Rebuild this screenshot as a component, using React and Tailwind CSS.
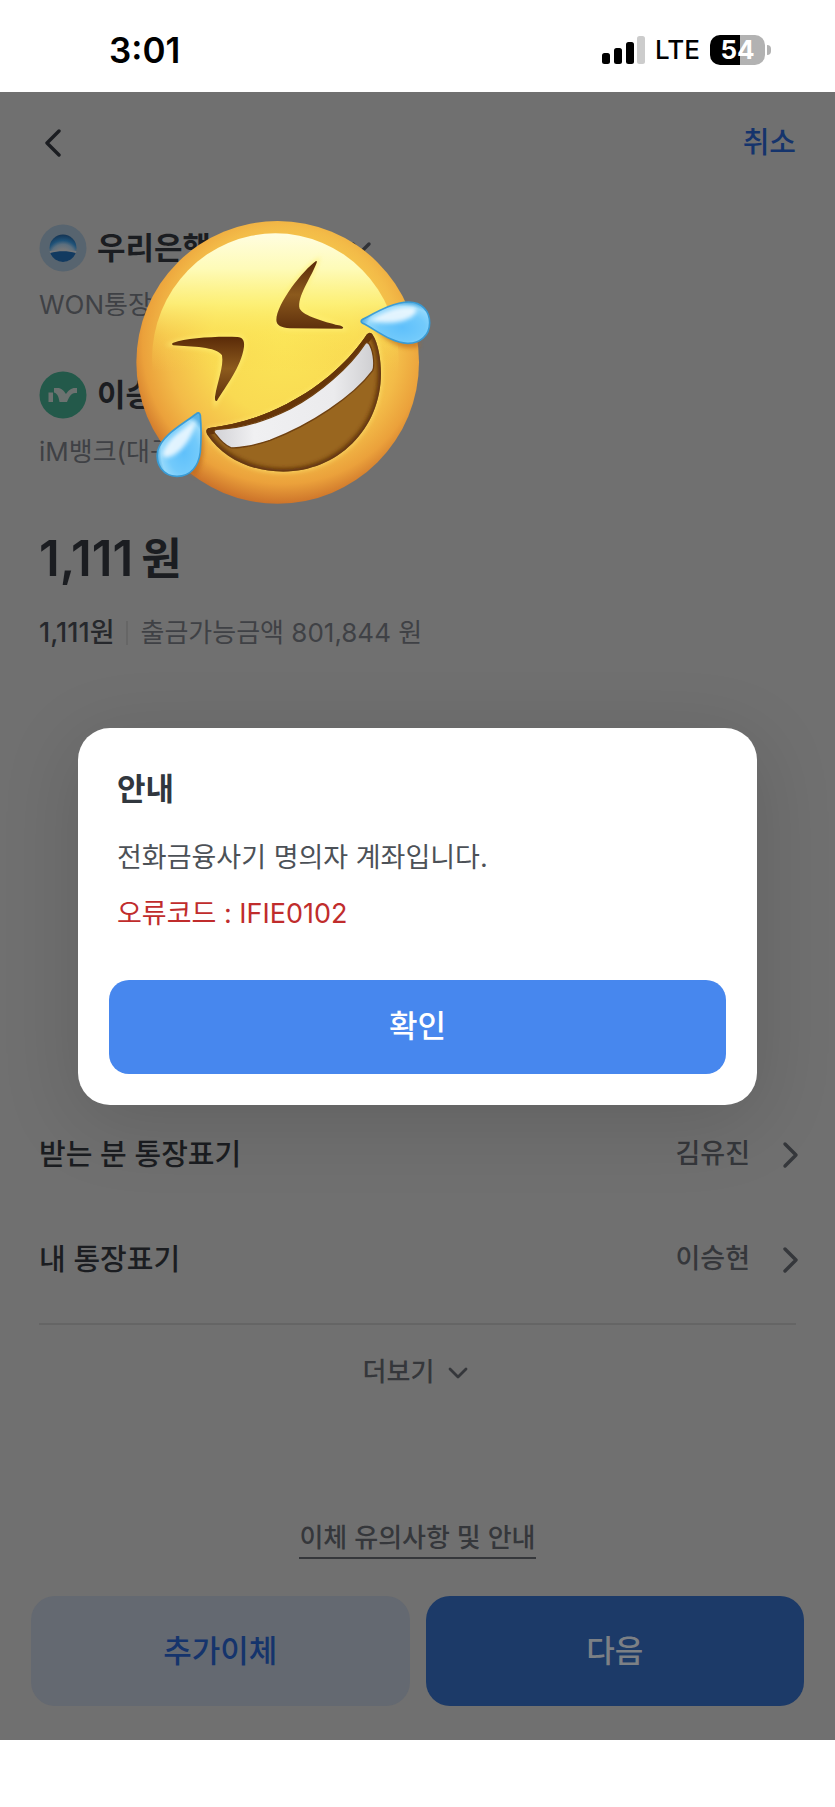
import { useState } from "react";
import clsx from "clsx";

const ENTRIES = [
  { id: "receiver", label: "받는 분 통장표기", value: "김유진" },
  { id: "mine", label: "내 통장표기", value: "이승현" },
];

function Chevron({ points, className, width = 3.4 }) {
  return (
    <svg viewBox="0 0 28 28" className={clsx("h-7 w-7", className)} fill="none" aria-hidden="true">
      <polyline
        points={points}
        stroke="currentColor"
        strokeWidth={width}
        strokeLinecap="round"
        strokeLinejoin="round"
      />
    </svg>
  );
}

function StatusBar() {
  return (
    <div className="flex h-[92px] items-center justify-between bg-white pt-2 pr-16 pl-[109px] text-black">
      <span className="text-[35px] leading-10 font-semibold">3:01</span>
      <div className="flex items-center">
        <svg viewBox="0 0 44 28" className="h-7 w-11" aria-hidden="true">
          <rect x="1" y="17" width="8" height="11" rx="2.5" />
          <rect x="13" y="12" width="8" height="16" rx="2.5" />
          <rect x="25" y="6" width="8" height="22" rx="2.5" />
          <rect x="36" y="0" width="8" height="28" rx="2.5" fill="#cccccc" />
        </svg>
        <span className="ml-2.5 text-[26px] leading-10 font-medium">LTE</span>
        <div className="ml-2.5 flex h-[30px] w-[55px] items-center justify-center rounded-[10px] bg-linear-to-r from-black from-54% to-[#b2b2b2] to-54% text-[26px] leading-[30px] font-bold text-white">
          54
        </div>
        <span className="ml-0.5 h-2.5 w-1 rounded-r-full bg-[#b2b2b2]" />
      </div>
    </div>
  );
}

function WooriLogo() {
  return (
    <svg viewBox="0 0 48 48" className="h-12 w-12" aria-hidden="true">
      <defs>
        <radialGradient id="woori" gradientUnits="userSpaceOnUse" cx="24" cy="33" r="23">
          <stop offset="0.35" stopColor="#74777a" />
          <stop offset="0.55" stopColor="#5c6f7e" />
          <stop offset="0.72" stopColor="#1f5278" />
          <stop offset="1" stopColor="#12304f" />
        </radialGradient>
      </defs>
      <circle cx="24" cy="24" r="23.5" fill="#57646f" />
      <circle cx="24" cy="24" r="13.5" fill="url(#woori)" />
      <path d="M10.6 27c8-1.500 18.800-1.500 26.800 0l-.6 2.500c-8-2.200-17.600-2.200-25.600 0z" fill="#74777a" />
      <path d="M11.300 29c8-2.200 17.400-2.200 25.400 0a13.500 13.500 0 0 1-25.400 0z" fill="#123a60" />
    </svg>
  );
}

function ImBankLogo() {
  return (
    <svg viewBox="0 0 48 48" className="h-12 w-12" aria-hidden="true">
      <circle cx="24" cy="24" r="23.5" fill="#23594a" />
      <path d="M9.500 21.500h4.500V31H9.500z" fill="#6c7270" />
      <path
        d="M15 17h3.500c4 0 6 2.500 8.500 6 2.500-3.500 5-6 9-6h2v5h-2c-4 0-5.500 3.500-8 9h-7.500c-.5-3.500-1.500-8.500-5.500-9.500z"
        fill="#6c7270"
      />
    </svg>
  );
}

const MOUTH =
  "M741 403C690 480 610 555 500 612 420 654 340 676 268 684 258 686 256 694 262 704 310 775 395 815 490 815 650 815 783 690 783 520 783 480 775 430 758 404 753 397 747 396 741 403Z";

function LaughingFace() {
  return (
    <svg viewBox="0 0 990 960" className="absolute top-[108px] left-[120px] h-80 w-[330px]" aria-hidden="true">
      <defs>
        <radialGradient id="face" gradientUnits="userSpaceOnUse" cx="490" cy="430" r="485">
          <stop offset="0" stopColor="#fbe557" />
          <stop offset="0.45" stopColor="#f9da52" />
          <stop offset="0.72" stopColor="#f3bb48" />
          <stop offset="0.87" stopColor="#eba13b" />
          <stop offset="1" stopColor="#cb7129" />
        </radialGradient>
        <linearGradient id="shine" x1="0" y1="0" x2="0" y2="1">
          <stop offset="0" stopColor="#fffde0" />
          <stop offset="0.14" stopColor="#fefbb8" />
          <stop offset="0.28" stopColor="#fdf27a" stopOpacity="0.9" />
          <stop offset="0.4" stopColor="#fce75c" stopOpacity="0.4" />
          <stop offset="0.55" stopColor="#f9d24b" stopOpacity="0" />
        </linearGradient>
        <linearGradient id="eye" x1="0" y1="0" x2="0" y2="1">
          <stop offset="0" stopColor="#5a2a08" />
          <stop offset="0.5" stopColor="#8c5a1d" />
          <stop offset="1" stopColor="#5f300c" />
        </linearGradient>
        <linearGradient id="teeth" x1="0" y1="0" x2="1" y2="0">
          <stop offset="0" stopColor="#d2d2d6" />
          <stop offset="0.25" stopColor="#f0f0f2" />
          <stop offset="0.75" stopColor="#ebebed" />
          <stop offset="1" stopColor="#cfcfd2" />
        </linearGradient>
        <radialGradient id="tear" cx="0.6" cy="0.62" r="0.6">
          <stop offset="0" stopColor="#5fc0fb" />
          <stop offset="0.55" stopColor="#72cafb" />
          <stop offset="0.85" stopColor="#93d8fb" />
          <stop offset="1" stopColor="#58b2e6" />
        </radialGradient>
        <filter id="soft" x="-20%" y="-20%" width="140%" height="140%">
          <feGaussianBlur stdDeviation="7" />
        </filter>
        <clipPath id="mouth">
          <path d={MOUTH} />
        </clipPath>
      </defs>

      <circle cx="473" cy="487" r="424" fill="url(#face)" />
      <ellipse cx="466" cy="478" rx="370" ry="378" fill="url(#shine)" />

      {/* eyes */}
      <g stroke="#fff176" strokeWidth="12" strokeOpacity="0.7" filter="url(#soft)" fill="none">
        <path d="M590 184C550 210 468 310 469 362 470 378 484 384 510 385L668 385C640 362 560 352 540 326 530 290 570 240 590 184Z" />
        <path d="M158 432C200 414 290 408 352 411 370 413 374 424 372 440 364 500 310 560 288 604 286 570 312 500 306 464 290 440 210 440 158 432Z" />
      </g>
      <path
        d="M588 183C550 210 470 310 469 360 469 376 484 383 510 385L666 386C674 384 668 378 656 376 610 364 552 348 539 326 530 290 572 236 590 188 591 183 590 182 588 183Z"
        fill="url(#eye)"
      />
      <path
        d="M160 428C200 414 290 408 352 411 368 412 374 422 372 440 364 500 316 560 291 602 287 606 284 600 285 590 292 545 312 500 306 466 290 440 215 440 160 436 155 434 155 430 160 428Z"
        fill="url(#eye)"
      />

      {/* mouth */}
      <path d={MOUTH} fill="#fff07a" stroke="#fff07a" strokeWidth="8" filter="url(#soft)" opacity="0.5" />
      <path d={MOUTH} fill="#99661f" />
      <g clipPath="url(#mouth)">
        <path d={MOUTH} fill="none" stroke="#5c2e08" strokeWidth="18" filter="url(#soft)" />
        <path
          d="M262 692C340 684 420 662 504 618 614 561 690 488 748 404"
          fill="none"
          stroke="#663509"
          strokeWidth="24"
        />
      </g>
      <path
        d="M736 430C690 500 600 580 510 627 430 667 350 686 290 688 280 690 280 696 288 704 300 720 315 736 332 743 350 746 400 738 450 721 570 676 700 590 758 512 764 500 762 460 750 436 746 428 740 426 736 430Z"
        fill="url(#teeth)"
        stroke="#6f400f"
        strokeWidth="4"
      />

      {/* tears */}
      <path d="M760 380C800 430 850 455 900 440L890 400Z" fill="#b9671d" opacity="0.6" filter="url(#soft)" />
      <path
        d="M728 358C770 336 820 306 866 306 906 306 929 334 929 368 929 406 900 431 862 430 812 428 766 388 728 370 722 366 722 361 728 358Z"
        fill="url(#tear)"
        stroke="#3a9bd4"
        strokeWidth="5"
      />
      <path d="M745 361C800 330 840 314 885 322 905 345 840 385 745 361Z" fill="#ffffff" opacity="0.8" filter="url(#soft)" />
      <path d="M246 680C256 740 254 790 226 830L200 810Z" fill="#b9671d" opacity="0.6" filter="url(#soft)" />
      <path
        d="M228 642C190 672 125 705 113 752 105 795 130 828 170 829 214 830 236 796 241 756 244 716 244 680 241 646 239 637 234 637 228 642Z"
        fill="url(#tear)"
        stroke="#3a9bd4"
        strokeWidth="5"
      />
      <path d="M228 660C180 690 135 722 127 765 145 790 215 740 228 660Z" fill="#ffffff" opacity="0.8" filter="url(#soft)" />
    </svg>
  );
}

function Account({ logo, name, detail, expandable }) {
  return (
    <div>
      <div className="flex h-12 items-center gap-2.5">
        {logo}
        <h2 className="w-[240px] truncate text-[31px] leading-12 font-bold text-[#1b1d21]">{name}</h2>
        {expandable && <Chevron points="6,10 14,18 22,10" className="text-[#303236]" />}
      </div>
      <p className="mt-[13px] text-[26px] leading-10 text-[#3f4145]">{detail}</p>
    </div>
  );
}

function NoticeDialog({ onConfirm }) {
  return (
    <div className="absolute inset-0 flex items-center px-[78px]">
      <div
        role="dialog"
        aria-labelledby="notice-title"
        className="w-full rounded-[32px] bg-white px-[31px] pt-[37px] pb-[31px] shadow-[0_16px_80px_rgba(0,0,0,0.14)]"
      >
        <div className="px-2">
          <h1 id="notice-title" className="text-[31px] leading-12 font-bold text-[#31373e]">
            안내
          </h1>
          <p className="mt-[25px] text-[27px] leading-10 text-[#4c5157]">전화금융사기 명의자 계좌입니다.</p>
          <p className="mt-4 text-[27px] leading-10 text-[#c02c2c]">오류코드 : IFIE0102</p>
        </div>
        <button
          type="button"
          onClick={onConfirm}
          className="mt-[46px] h-[94px] w-full rounded-[20px] bg-[#4787ee] text-[31px] font-medium text-white"
        >
          확인
        </button>
      </div>
    </div>
  );
}

export default function App() {
  const [open, setOpen] = useState(true);

  return (
    <div className="bg-white pb-[67px] font-[Inter,'Noto_Sans_CJK_KR',sans-serif]">
      <StatusBar />
      <main className="relative bg-[#707070] px-[39px] pb-[34px]">
        <header className="flex h-[102px] items-center justify-between">
          <button type="button" aria-label="뒤로">
            <Chevron points="20,2 8,14 20,26" className="text-[#1b1d21]" />
          </button>
          <button type="button" className="text-[29px] leading-10 font-medium text-[#15346c]">
            취소
          </button>
        </header>

        <section className="space-y-[46px] pt-[30px]">
          <Account logo={<WooriLogo />} name="우리은행" detail="WON통장" expandable />
          <Account logo={<ImBankLogo />} name="이승현" detail="iM뱅크(대구)" />
        </section>

        <section className="mt-[55px]">
          <p className="flex items-center gap-2 leading-16 font-semibold text-[#1b1d21]">
            <span className="text-[49px]">1,111</span>
            <span className="text-[44px]">원</span>
          </p>
          <div className="mt-[22px] flex items-center leading-10 text-[#3f4145]">
            <span className="text-[27px] font-medium text-[#26282c]">1,111원</span>
            <span className="mx-3 h-6 w-0.5 bg-[#666666]" />
            <span className="text-[26px]">출금가능금액 801,844 원</span>
          </div>
        </section>

        <section className="mt-[449px] border-b-2 border-[#656565] pb-[11px]">
          {ENTRIES.map((entry) => (
            <button key={entry.id} type="button" className="flex h-[105px] w-full items-center">
              <span className="text-[29px] font-medium text-[#1b1d21]">{entry.label}</span>
              <span className="ml-auto text-[27px] font-medium text-[#35373b]">{entry.value}</span>
              <Chevron points="9,3 20,14 9,25" className="-mr-2 ml-[26px] text-[#35373b]" />
            </button>
          ))}
        </section>

        <div className="mt-[27px] flex justify-center">
          <button type="button" className="flex items-center gap-2.5 text-[26px] leading-10 font-medium text-[#35373b]">
            더보기
            <Chevron points="6,11 14,19 22,11" width={2.8} />
          </button>
        </div>

        <div className="mt-[127px] flex justify-center">
          <a href="#notice" className="border-b-2 border-[#35373b] text-[26px] leading-[38px] font-medium text-[#35373b]">
            이체 유의사항 및 안내
          </a>
        </div>

        <div className="-mx-2 mt-[37px] grid grid-cols-2 gap-4 text-[31px] font-medium">
          <button type="button" className="h-[110px] rounded-3xl bg-[#646971] text-[#15346c]">
            추가이체
          </button>
          <button type="button" className="h-[110px] rounded-3xl bg-[#1c3a68] text-[#7c8085]">
            다음
          </button>
        </div>

        <LaughingFace />
        {open && <NoticeDialog onConfirm={() => setOpen(false)} />}
      </main>
    </div>
  );
}
